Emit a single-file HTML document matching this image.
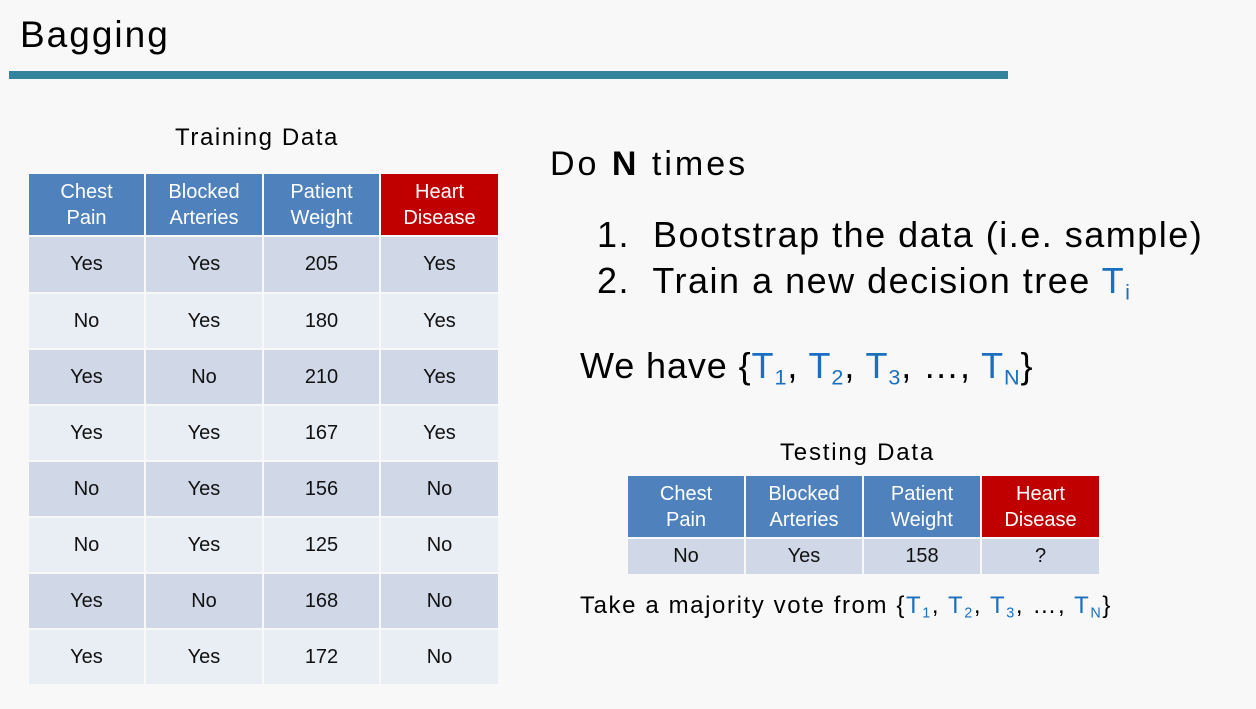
<!DOCTYPE html>
<html><head><style>
body{margin:0;width:1256px;height:709px;background:#f8f8f8;font-family:"Liberation Sans",sans-serif;color:#000;position:relative;overflow:hidden}
.a{position:absolute;white-space:nowrap}
.bar{position:absolute;left:9px;top:71px;width:999px;height:8px;background:#31849b}
table{position:absolute;border-collapse:separate;border-spacing:2px;font-size:20px;color:#111;table-layout:fixed}
td{text-align:center;padding:0;overflow:hidden}
th{font-weight:normal;color:#fff;background:#4f81bd;font-size:20px;line-height:26px;padding:0}
th.r{background:#c00000}
tr.o td{background:#d0d8e8}
tr.e td{background:#e9edf4}
.b{color:#1a6fc0}
sub{font-size:60%;vertical-align:-0.3em}
</style></head><body>
<div class="a" style="left:20px;top:14px;font-size:37px;letter-spacing:2px">Bagging</div>
<div class="bar"></div>
<div class="a" style="left:175px;top:124px;font-size:24px;letter-spacing:1.6px">Training Data</div>
<table style="left:27px;top:172px;width:473px">
<colgroup><col style="width:115px"><col style="width:116px"><col style="width:115px"><col style="width:117px"></colgroup>
<tr style="height:61px"><th>Chest<br>Pain</th><th>Blocked<br>Arteries</th><th>Patient<br>Weight</th><th class="r">Heart<br>Disease</th></tr>
<tr class="o" style="height:55px"><td>Yes</td><td>Yes</td><td>205</td><td>Yes</td></tr>
<tr class="e" style="height:54px"><td>No</td><td>Yes</td><td>180</td><td>Yes</td></tr>
<tr class="o" style="height:54px"><td>Yes</td><td>No</td><td>210</td><td>Yes</td></tr>
<tr class="e" style="height:54px"><td>Yes</td><td>Yes</td><td>167</td><td>Yes</td></tr>
<tr class="o" style="height:54px"><td>No</td><td>Yes</td><td>156</td><td>No</td></tr>
<tr class="e" style="height:54px"><td>No</td><td>Yes</td><td>125</td><td>No</td></tr>
<tr class="o" style="height:54px"><td>Yes</td><td>No</td><td>168</td><td>No</td></tr>
<tr class="e" style="height:54px"><td>Yes</td><td>Yes</td><td>172</td><td>No</td></tr>
</table>
<div class="a" style="left:550px;top:145px;font-size:34px;letter-spacing:3px">Do <b>N</b> times</div>
<div class="a" style="left:597px;top:214px;font-size:36px;letter-spacing:1.5px">1.&nbsp; Bootstrap the data (i.e. sample)</div>
<div class="a" style="left:597px;top:260px;font-size:36px;letter-spacing:1.5px">2.&nbsp; Train a new decision tree <span class="b">T<sub>i</sub></span></div>
<div class="a" style="left:580px;top:345px;font-size:36px;letter-spacing:0.9px">We have {<span class="b">T<sub>1</sub></span>, <span class="b">T<sub>2</sub></span>, <span class="b">T<sub>3</sub></span>, …, <span class="b">T<sub>N</sub></span>}</div>
<div class="a" style="left:780px;top:439px;font-size:24px;letter-spacing:1.8px">Testing Data</div>
<table style="left:626px;top:474px;width:475px">
<colgroup><col style="width:116px"><col style="width:116px"><col style="width:116px"><col style="width:117px"></colgroup>
<tr style="height:61px"><th>Chest<br>Pain</th><th>Blocked<br>Arteries</th><th>Patient<br>Weight</th><th class="r">Heart<br>Disease</th></tr>
<tr class="o" style="height:35px"><td>No</td><td>Yes</td><td>158</td><td>?</td></tr>
</table>
<div class="a" style="left:580px;top:592px;font-size:24px;letter-spacing:1.6px">Take a majority vote from {<span class="b">T<sub>1</sub></span>, <span class="b">T<sub>2</sub></span>, <span class="b">T<sub>3</sub></span>, …, <span class="b">T<sub>N</sub></span>}</div>
</body></html>
